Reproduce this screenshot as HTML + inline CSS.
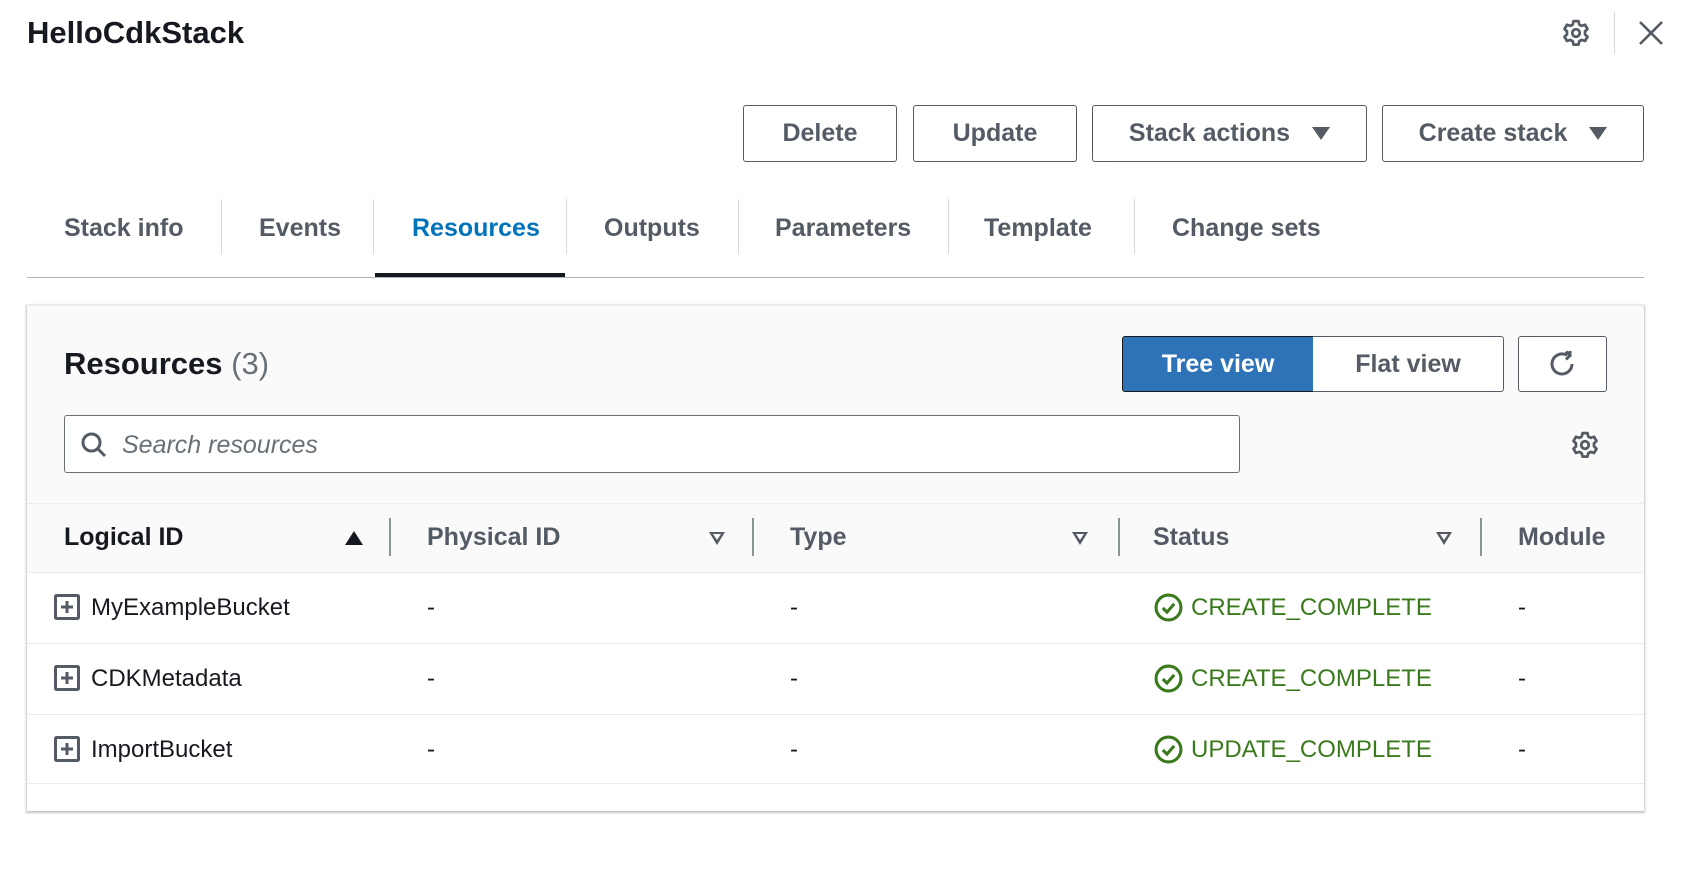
<!DOCTYPE html>
<html><head><meta charset="utf-8"><style>
*{box-sizing:border-box;margin:0;padding:0}
body{width:1691px;height:871px;background:#fff;font-family:"Liberation Sans",sans-serif;color:#16191f;position:relative;overflow:hidden}
.a{position:absolute}
.t{position:absolute;white-space:nowrap;line-height:1}
.btn{position:absolute;border:1.5px solid #545b64;border-radius:3px;background:#fff;color:#545b64;font-weight:bold;font-size:25px;display:flex;align-items:center;justify-content:center;gap:22px}
.tri{width:0;height:0;border-left:9px solid transparent;border-right:9px solid transparent;border-top:13px solid #545b64}
.tab{position:absolute;top:216px;font-size:25px;font-weight:bold;color:#545b64;line-height:1}
.sep{position:absolute;top:199px;width:1px;height:55px;background:#d5dbdb}
.hline{position:absolute;left:27px;width:1617px;height:1px;background:#eaeded}
.hd{position:absolute;top:525px;font-size:25px;font-weight:bold;color:#545b64;line-height:1}
.cs{position:absolute;top:518px;width:1.5px;height:38px;background:#879596}
.dt{position:absolute;width:0;height:0;border-left:8px solid transparent;border-right:8px solid transparent;border-top:13px solid #545b64}
.dt::after{content:"";position:absolute;left:-4px;top:-11px;border-left:4px solid transparent;border-right:4px solid transparent;border-top:6px solid #fafafa}
.cell{position:absolute;font-size:24px;line-height:1}
.g{color:#3b7a1c}
</style></head><body>
<div class="t" style="left:27px;top:17px;font-size:31px;font-weight:bold">HelloCdkStack</div>
<svg class="a" style="left:1568px;top:18px;transform:translateX(-7px)" width="30" height="30" viewBox="0 0 24 24" fill="none" stroke="#545b64" stroke-width="2.2" stroke-linejoin="round"><path d="M10 2.5h4l.6 2.7 2 1.1 2.6-.9 2 3.4-2 1.9v2.4l2 1.9-2 3.4-2.6-.9-2 1.1-.6 2.7h-4l-.6-2.7-2-1.1-2.6.9-2-3.4 2-1.9v-2.4l-2-1.9 2-3.4 2.6.9 2-1.1z"/><circle cx="12" cy="12" r="3"/></svg>
<div class="a" style="left:1614px;top:12px;width:1px;height:42px;background:#d5dbdb"></div>
<svg class="a" style="left:1638px;top:20px" width="26" height="26" viewBox="0 0 26 26" stroke="#545b64" stroke-width="2.6"><path d="M2 2L24 24M24 2L2 24"/></svg>

<div class="btn" style="left:743px;top:105px;width:154px;height:57px">Delete</div>
<div class="btn" style="left:913px;top:105px;width:164px;height:57px">Update</div>
<div class="btn" style="left:1092px;top:105px;width:275px;height:57px">Stack actions<span class="tri"></span></div>
<div class="btn" style="left:1382px;top:105px;width:262px;height:57px">Create stack<span class="tri"></span></div>

<div class="tab" style="left:64px">Stack info</div>
<div class="sep" style="left:221px"></div>
<div class="tab" style="left:259px">Events</div>
<div class="sep" style="left:373px"></div>
<div class="tab" style="left:412px;color:#0073bb">Resources</div>
<div class="sep" style="left:566px"></div>
<div class="tab" style="left:604px">Outputs</div>
<div class="sep" style="left:738px"></div>
<div class="tab" style="left:775px">Parameters</div>
<div class="sep" style="left:948px"></div>
<div class="tab" style="left:984px">Template</div>
<div class="sep" style="left:1134px"></div>
<div class="tab" style="left:1172px">Change sets</div>
<div class="a" style="left:27px;top:277px;width:1617px;height:1px;background:#aab7b8"></div>
<div class="a" style="left:375px;top:273px;width:190px;height:4px;background:#16191f"></div>

<div class="a" style="left:27px;top:305px;width:1617px;height:506px;background:#fafafa;border-top:1px solid #eaeded;box-shadow:0 1px 2px 1px rgba(0,28,36,.25)"></div>
<div class="a" style="left:27px;top:572px;width:1617px;height:239px;background:#fff"></div>
<div class="t" style="left:64px;top:348px;font-size:31px;font-weight:bold">Resources <span style="font-weight:normal;color:#687078">(3)</span></div>

<div class="a" style="left:1122px;top:336px;width:192px;height:56px;background:#2e73b8;border:1.5px solid #16191f;border-radius:3px 0 0 3px;color:#fff;font-weight:bold;font-size:25px;display:flex;align-items:center;justify-content:center">Tree view</div>
<div class="a" style="left:1313px;top:336px;width:191px;height:56px;background:#fff;border:1.5px solid #545b64;border-left:none;border-radius:0 3px 3px 0;color:#545b64;font-weight:bold;font-size:25px;display:flex;align-items:center;justify-content:center">Flat view</div>
<div class="a" style="left:1518px;top:336px;width:89px;height:56px;background:#fff;border:1.5px solid #545b64;border-radius:3px"></div>
<svg class="a" style="left:1546px;top:348px" width="32" height="32" viewBox="0 0 32 32" fill="none" stroke="#545b64" stroke-width="3"><path d="M26 16A10 10 0 1 1 21 7.3"/><path d="M20 3.5L24 7.5L20 11.5" stroke-linejoin="round"/><path d="M24 3v6" /></svg>

<div class="a" style="left:64px;top:415px;width:1176px;height:58px;background:#fff;border:1.5px solid #687078;border-radius:3px"></div>
<svg class="a" style="left:80px;top:431px" width="28" height="28" viewBox="0 0 28 28" fill="none" stroke="#545b64" stroke-width="3"><circle cx="11.5" cy="11.5" r="8.5"/><path d="M18 18L25 25"/></svg>
<div class="t" style="left:122px;top:433px;font-size:25px;font-style:italic;color:#687078">Search resources</div>
<svg class="a" style="left:1570px;top:430px" width="30" height="30" viewBox="0 0 24 24" fill="none" stroke="#545b64" stroke-width="2.2" stroke-linejoin="round"><path d="M10 2.5h4l.6 2.7 2 1.1 2.6-.9 2 3.4-2 1.9v2.4l2 1.9-2 3.4-2.6-.9-2 1.1-.6 2.7h-4l-.6-2.7-2-1.1-2.6.9-2-3.4 2-1.9v-2.4l-2-1.9 2-3.4 2.6.9 2-1.1z"/><circle cx="12" cy="12" r="3"/></svg>

<div class="hline" style="top:503px"></div>
<div class="hd" style="left:64px;color:#16191f">Logical ID</div>
<div class="a" style="left:345px;top:531px;width:0;height:0;border-left:9px solid transparent;border-right:9px solid transparent;border-bottom:14px solid #16191f"></div>
<div class="cs" style="left:389px"></div>
<div class="hd" style="left:427px">Physical ID</div>
<div class="dt" style="left:709px;top:532px"></div>
<div class="cs" style="left:752px"></div>
<div class="hd" style="left:790px">Type</div>
<div class="dt" style="left:1072px;top:532px"></div>
<div class="cs" style="left:1118px"></div>
<div class="hd" style="left:1153px">Status</div>
<div class="dt" style="left:1436px;top:532px"></div>
<div class="cs" style="left:1480px"></div>
<div class="hd" style="left:1518px">Module</div>
<div class="hline" style="top:572px"></div>
<div class="hline" style="top:643px"></div>
<div class="hline" style="top:714px"></div>
<div class="hline" style="top:783px"></div>

<svg class="a" style="left:54px;top:594px" width="26" height="26" viewBox="0 0 26 26" fill="none" stroke="#545b64"><rect x="1.5" y="1.5" width="23" height="23" rx="1" stroke-width="3"/><path d="M13 7v12M7 13h12" stroke-width="3"/></svg>
<div class="cell" style="left:91px;top:596px">MyExampleBucket</div>
<div class="cell" style="left:427px;top:596px">-</div>
<div class="cell" style="left:790px;top:596px">-</div>
<svg class="a" style="left:1154px;top:593px" width="29" height="29" viewBox="0 0 28 28" fill="none" stroke="#3b7a1c" stroke-width="3"><circle cx="14" cy="14" r="12"/><path d="M8.5 14.5l4 4 7-8"/></svg>
<div class="cell g" style="left:1191px;top:596px">CREATE_COMPLETE</div>
<div class="cell" style="left:1518px;top:596px">-</div>

<svg class="a" style="left:54px;top:665px" width="26" height="26" viewBox="0 0 26 26" fill="none" stroke="#545b64"><rect x="1.5" y="1.5" width="23" height="23" rx="1" stroke-width="3"/><path d="M13 7v12M7 13h12" stroke-width="3"/></svg>
<div class="cell" style="left:91px;top:667px">CDKMetadata</div>
<div class="cell" style="left:427px;top:667px">-</div>
<div class="cell" style="left:790px;top:667px">-</div>
<svg class="a" style="left:1154px;top:664px" width="29" height="29" viewBox="0 0 28 28" fill="none" stroke="#3b7a1c" stroke-width="3"><circle cx="14" cy="14" r="12"/><path d="M8.5 14.5l4 4 7-8"/></svg>
<div class="cell g" style="left:1191px;top:667px">CREATE_COMPLETE</div>
<div class="cell" style="left:1518px;top:667px">-</div>

<svg class="a" style="left:54px;top:736px" width="26" height="26" viewBox="0 0 26 26" fill="none" stroke="#545b64"><rect x="1.5" y="1.5" width="23" height="23" rx="1" stroke-width="3"/><path d="M13 7v12M7 13h12" stroke-width="3"/></svg>
<div class="cell" style="left:91px;top:738px">ImportBucket</div>
<div class="cell" style="left:427px;top:738px">-</div>
<div class="cell" style="left:790px;top:738px">-</div>
<svg class="a" style="left:1154px;top:735px" width="29" height="29" viewBox="0 0 28 28" fill="none" stroke="#3b7a1c" stroke-width="3"><circle cx="14" cy="14" r="12"/><path d="M8.5 14.5l4 4 7-8"/></svg>
<div class="cell g" style="left:1191px;top:738px">UPDATE_COMPLETE</div>
<div class="cell" style="left:1518px;top:738px">-</div>
</body></html>
